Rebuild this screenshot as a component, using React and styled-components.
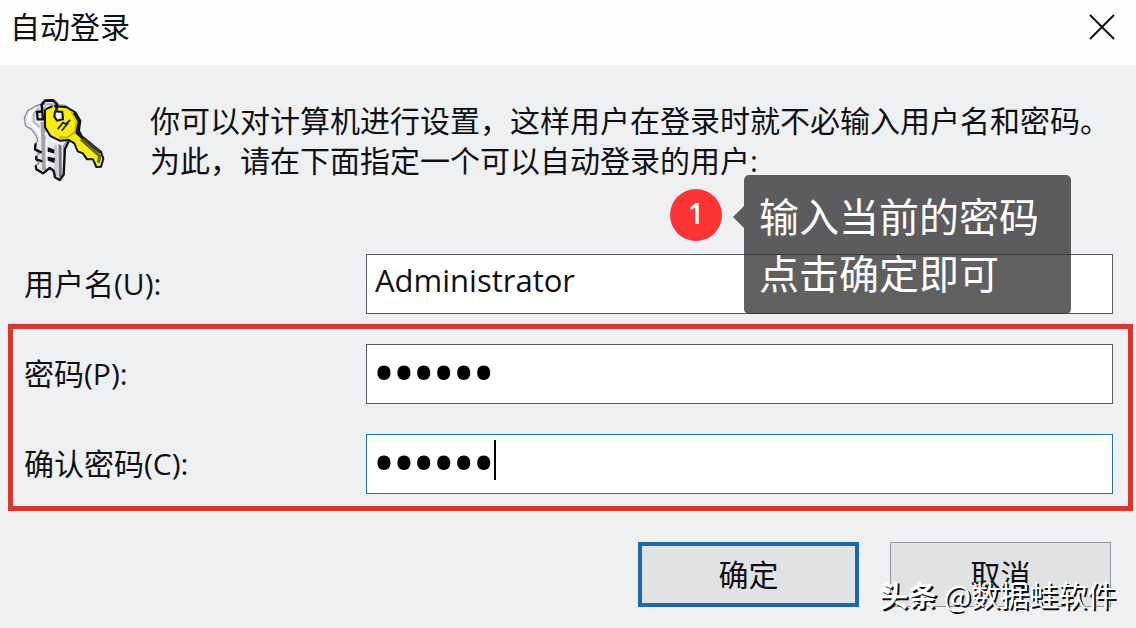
import React, { useState } from 'react'
import styled, { createGlobalStyle } from 'styled-components'


function KeysIcon() {
  return (
    <svg width="82" height="84" viewBox="40 24 246 252" aria-hidden="true">
      {/* silver key */}
      <path d="M78 48 L98 42 L134 44 L168 46 L160 80 L152 130 L172 152 L162 168 L164 252 L152 270 L137 264 L132 242 L124 234 L114 240 L100 250 L80 238 L78 226 L88 220 L78 208 L80 198 L88 192 L76 178 L78 160 L84 152 L80 138 L66 118 L48 108 L44 84 L54 62 Z"
        fill="#e9e9ee" stroke="#8a8a92" strokeWidth="4" strokeLinejoin="round" />
      <path d="M82 58 L62 70 L56 94 L76 108 L94 138" fill="none" stroke="#ffffff" strokeWidth="8" />
      <path d="M88 54 L72 72 L72 96 L90 112" fill="none" stroke="#b4b4ba" strokeWidth="6" />
      <path d="M100 96 L104 240" fill="none" stroke="#a3a3a8" strokeWidth="14" />
      <path d="M110 148 L112 236" fill="none" stroke="#f8f8fa" strokeWidth="7" />
      <path d="M138 164 L140 258" fill="none" stroke="#c8c8cd" strokeWidth="9" />
      <path d="M151 162 L152 262" fill="none" stroke="#77777d" strokeWidth="9" />
      <path d="M78 160 L76 178 L96 188 M80 198 L80 208 L98 214 M78 226 L80 238 L100 250 L120 234 L132 242 L136 262 L150 270 L162 254 L166 176 L178 152"
        fill="none" stroke="#111111" strokeWidth="7" strokeLinejoin="round" />
      <path d="M116 174 L132 180 L132 188 L116 184 Z M116 202 L134 206 L132 216 L116 210 Z" fill="#161616" stroke="#111111" strokeWidth="4" />
      <path d="M106 128 L124 148 L158 162" fill="none" stroke="#f4f4f8" strokeWidth="9" />

      {/* yellow key */}
      <path d="M106 58 L130 48 L172 52 L198 68 L212 92 L208 122 L216 138 L274 186 L281 206 L274 230 L260 231 L250 208 L232 208 L220 190 L204 184 L194 160 L178 150 L150 152 L122 138 L106 112 Z"
        fill="#f6ec12" stroke="#11110a" strokeWidth="6" strokeLinejoin="round" />
      <path d="M186 66 L202 92 L196 126 L174 142 L148 142" fill="none" stroke="#c4b818" strokeWidth="7" />
      <path d="M194 68 L209 94 L202 128 L220 146 L274 188" fill="none" stroke="#171708" strokeWidth="9" />
      <path d="M214 148 L270 198 L266 218" fill="none" stroke="#6e6612" strokeWidth="9" />
      <path d="M222 146 L272 186" fill="none" stroke="#4a4a40" strokeWidth="4" />
      <path d="M144 118 L160 98 L168 102 L182 90 M156 122 L176 98" fill="none" stroke="#1d1d0c" strokeWidth="5" />

      {/* ring */}
      <path d="M136 64 L158 66 L160 88 L142 92 L134 80 Z" fill="#eceef0" stroke="#111111" strokeWidth="6" />
      <path d="M82 66 L98 64 L100 88 L84 88 Z" fill="#d8d8dc" stroke="#111111" strokeWidth="7" />
      <path d="M98 62 L96 44 L106 32 L130 31 L142 42 L140 62" fill="none" stroke="#111111" strokeWidth="8" strokeLinejoin="round" />
      <path d="M106 58 L106 44 L114 40 L130 42 L132 54" fill="none" stroke="#bfc0c4" strokeWidth="5" />
    </svg>
  )
}

function App() {
  const [userName, setUserName] = useState('Administrator')
  const [password, setPassword] = useState('123456')
  const [confirm, setConfirm] = useState('123456')

  return (
    <>
      <GlobalStyle />
      <StDialog>
        <StTitleBar>
          <StTitle>自动登录</StTitle>
          <StCloseButton type="button" aria-label="关闭">
            <svg width="26" height="26" viewBox="0 0 26 26">
              <path d="M1 1 L25 25 M25 1 L1 25" stroke="#111111" strokeWidth="2" />
            </svg>
          </StCloseButton>
        </StTitleBar>

        <StIntro>
          <KeysIcon />
          <StIntroText>
            你可以对计算机进行设置，这样用户在登录时就不必输入用户名和密码。
            <br />
            为此，请在下面指定一个可以自动登录的用户:
          </StIntroText>
        </StIntro>

        <StUserSection>
          <StRow>
            <StLabel htmlFor="user">用户名(U):</StLabel>
            <StField>
              <StInput id="user" type="text" value={userName} onChange={(e) => setUserName(e.target.value)} />
              <StCallout>
                <StBadge>1</StBadge>
                <StBubble>
                  输入当前的密码
                  <br />
                  点击确定即可
                </StBubble>
              </StCallout>
            </StField>
          </StRow>
        </StUserSection>

        <StPasswordSection>
          <StRow>
            <StLabel htmlFor="password">密码(P):</StLabel>
            <StField>
              <StPasswordInput id="password" type="password" value={password} onChange={(e) => setPassword(e.target.value)} />
            </StField>
          </StRow>
          <StRow>
            <StLabel htmlFor="confirm">确认密码(C):</StLabel>
            <StField>
              <StPasswordInput id="confirm" type="password" $active value={confirm} onChange={(e) => setConfirm(e.target.value)} />
              <StCaret />
            </StField>
          </StRow>
        </StPasswordSection>

        <StButtons>
          <StButton type="button" $primary>确定</StButton>
          <StButton type="button">取消</StButton>
        </StButtons>

        <StWatermark><b>头条</b> @数据蛙软件</StWatermark>
      </StDialog>
    </>
  )
}

export default App

const GlobalStyle = createGlobalStyle`
  * {
    box-sizing: border-box;
  }

  body {
    margin: 0;
    background-color: #eff0f2;
    color: #101014;
    font-family: "Open Sans", "Noto Sans CJK SC", sans-serif;
    font-size: 30px;
  }
`

const StDialog = styled.main`
  position: relative;
  overflow: hidden;
`

const StTitleBar = styled.header`
  height: 65px;
  padding: 0 21px 12px 10px;
  display: flex;
  justify-content: space-between;
  align-items: center;
  background-color: #fefefe;
`

const StTitle = styled.h1`
  margin: 0;
  font-size: 30px;
  font-weight: 400;
  line-height: 40px;
`

const StCloseButton = styled.button`
  display: flex;
  padding: 0;
  border: none;
  background: none;
  cursor: pointer;
`

const StIntro = styled.section`
  padding: 33px 24px 0 23px;
  display: flex;
  gap: 45px;
`

const StIntroText = styled.p`
  flex: 1;
  margin: 3px 0 1px;
  line-height: 40px;
`

const StUserSection = styled.section`
  margin-top: 72px;
  padding: 0 23px 0 24px;
`

const StPasswordSection = styled.section`
  margin: 10px 3px 0 8px;
  padding: 15px 15px 12px 11px;
  display: flex;
  flex-direction: column;
  gap: 30px;
  border: 5px solid #e0352f;
`

const StRow = styled.div`
  display: flex;
  align-items: center;
`

const StLabel = styled.label`
  width: 342px;
  line-height: 40px;
  font-size: 30px;
`

const StField = styled.div`
  flex: 1;
  position: relative;
  display: flex;
`

const StInput = styled.input`
  width: 100%;
  height: 60px;
  padding: 0 8px 8px;
  border: 1px solid ${(props) => (props.$active ? '#1f6fa8' : '#5c5c62')};
  border-radius: 0;
  background-color: #ffffff;
  color: #101014;
  font-family: inherit;
  font-size: 31px;
  outline: none;
`

/* large type only sets the size of the dots */
const StPasswordInput = styled(StInput)`
  padding: 0 7px 6px;
  color: #000000;
  font-size: 53px;
  -webkit-text-stroke: 2px #000000;
`

const StCaret = styled.span`
  position: absolute;
  left: 128px;
  top: 6px;
  width: 2px;
  height: 40px;
  background-color: #000000;
`

const StCallout = styled.div`
  position: absolute;
  right: 42px;
  top: -79px;
  display: flex;
  gap: 22px;
  z-index: 1;
`

const StBadge = styled.span`
  width: 52px;
  height: 52px;
  margin-top: 14px;
  padding-bottom: 4px;
  display: flex;
  justify-content: center;
  align-items: center;
  border-radius: 50%;
  background-color: #fb3535;
  color: #ffffff;
  font-size: 28px;
  font-weight: 600;
`

const StBubble = styled.div`
  position: relative;
  width: 327px;
  padding: 13px 15px 12px;
  border-radius: 5px;
  background-color: rgba(40, 40, 42, 0.74);
  color: #ffffff;
  font-size: 40px;
  line-height: 57px;

  &::before {
    content: '';
    position: absolute;
    left: -11px;
    top: 31px;
    border: solid transparent;
    border-width: 11px 11px 11px 0;
    border-right-color: rgba(40, 40, 42, 0.74);
  }
`

const StButtons = styled.footer`
  padding: 31px 25px 20px;
  display: flex;
  justify-content: flex-end;
  gap: 31px;
`

const StButton = styled.button`
  width: 221px;
  height: 65px;
  padding: 0 0 4px;
  border: ${(props) => (props.$primary ? '4px solid #1a68b0' : '1px solid #96979b')};
  background-color: #e1e2e3;
  color: #101014;
  font-family: inherit;
  font-size: 30px;
  cursor: pointer;
`

const StWatermark = styled.div`
  position: absolute;
  right: 20px;
  bottom: 13px;
  color: #ffffff;
  font-family: "Noto Sans CJK SC", sans-serif;
  font-size: 29px;
  line-height: 40px;
  text-shadow: 2px 2px 0 #111111;
  pointer-events: none;
`
